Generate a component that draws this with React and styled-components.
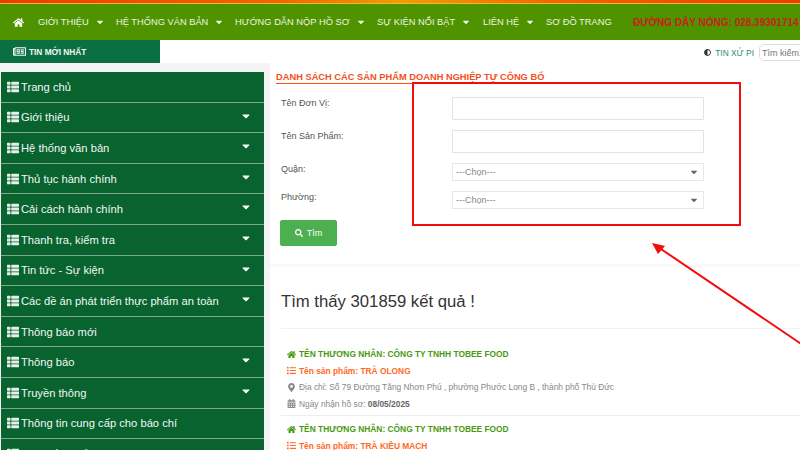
import React from 'react';
import styled, { createGlobalStyle } from 'styled-components';
import {
	FaHome,
	FaCaretDown,
	FaList,
	FaThList,
	FaRegNewspaper,
	FaAdjust,
	FaSearch,
	FaMapMarkerAlt,
	FaCalendarAlt,
} from 'react-icons/fa';

const GlobalStyle = createGlobalStyle`
	html, body {
		margin: 0;
		padding: 0;
		width: 800px;
		height: 450px;
		overflow: hidden;
		background: #fff;
		font-family: "Liberation Sans", Arial, sans-serif;
	}
	* {
		box-sizing: border-box;
	}
`;

const navItems = [
	{ label: 'GIỚI THIỆU', caret: true, width: 78 },
	{ label: 'HỆ THỐNG VĂN BẢN', caret: true, width: 119 },
	{ label: 'HƯỚNG DẪN NỘP HỒ SƠ', caret: true, width: 142 },
	{ label: 'SỰ KIỆN NỔI BẬT', caret: true, width: 106 },
	{ label: 'LIÊN HỆ', caret: true, width: 63 },
	{ label: 'SƠ ĐỒ TRANG', caret: false, width: 87 },
];

const sideItems = [
	{ label: 'Trang chủ' },
	{ label: 'Giới thiệu', caret: true },
	{ label: 'Hệ thống văn bản', caret: true },
	{ label: 'Thủ tục hành chính', caret: true },
	{ label: 'Cải cách hành chính', caret: true },
	{ label: 'Thanh tra, kiểm tra', caret: true },
	{ label: 'Tin tức - Sự kiện', caret: true },
	{ label: 'Các đề án phát triển thực phẩm an toàn', caret: true },
	{ label: 'Thông báo mới' },
	{ label: 'Thông báo', caret: true },
	{ label: 'Truyền thông', caret: true },
	{ label: 'Thông tin cung cấp cho báo chí' },
	{ label: 'Tìm kiếm Thủ tục hành chính' },
];

const results = [
	{
		company: 'TÊN THƯƠNG NHÂN: CÔNG TY TNHH TOBEE FOOD',
		product: 'Tên sản phẩm: TRÀ OLONG',
		address: 'Địa chỉ: Số 79 Đường Tăng Nhơn Phú , phường Phước Long B , thành phố Thủ Đức',
		date: '08/05/2025',
	},
	{
		company: 'TÊN THƯƠNG NHÂN: CÔNG TY TNHH TOBEE FOOD',
		product: 'Tên sản phẩm: TRÀ KIỀU MẠCH',
	},
];

export default function App() {
	return (
		<Page>
			<GlobalStyle />
			<TopStripe />
			<NavBar>
				<HomeLink>
					<FaHome size={11} />
				</HomeLink>
				{navItems.map(item => (
					<NavItem key={item.label} $width={item.width}>
						{item.label}
						{item.caret && <FaCaretDown size={10} />}
					</NavItem>
				))}
				<Hotline>ĐƯỜNG DÂY NÓNG: 028.39301714</Hotline>
			</NavBar>
			<TickerBar>
				<TickerTab>
					<FaRegNewspaper size={13} />
					TIN MỚI NHẤT
				</TickerTab>
				<TickerTools>
					<FaAdjust size={7} color="#333" />
					<TickerNews>TIN XỬ PI</TickerNews>
					<SearchInput placeholder="Tìm kiếm..." />
				</TickerTools>
			</TickerBar>
			<Body>
				<Sidebar>
					{sideItems.map(item => (
						<SideItem key={item.label}>
							<FaThList size={12} />
							<span>{item.label}</span>
							{item.caret && (
								<SideCaret>
									<FaCaretDown size={12} />
								</SideCaret>
							)}
						</SideItem>
					))}
				</Sidebar>
				<Content>
					<FormPanel>
						<PageTitle>DANH SÁCH CÁC SẢN PHẨM DOANH NGHIỆP TỰ CÔNG BỐ</PageTitle>
						<FormRow $height={33}>
							<FieldLabel>Tên Đơn Vị:</FieldLabel>
							<TextField $height={23} />
						</FormRow>
						<FormRow $height={33}>
							<FieldLabel>Tên Sản Phẩm:</FieldLabel>
							<TextField $height={23} />
						</FormRow>
						<FormRow $height={28}>
							<FieldLabel>Quận:</FieldLabel>
							<SelectField>
								---Chọn---
								<FaCaretDown size={10} color="#666" />
							</SelectField>
						</FormRow>
						<FormRow $height={28}>
							<FieldLabel>Phường:</FieldLabel>
							<SelectField>
								---Chọn---
								<FaCaretDown size={10} color="#666" />
							</SelectField>
						</FormRow>
						<SearchButton>
							<FaSearch size={8} />
							Tìm
						</SearchButton>
					</FormPanel>
					<ResultPanel>
						<ResultHeading>Tìm thấy 301859 kết quả !</ResultHeading>
						{results.map(result => (
							<ResultItem key={result.product}>
								<CompanyLine>
									<FaHome size={9} />
									{result.company}
								</CompanyLine>
								<ProductLine>
									<FaList size={9} />
									{result.product}
								</ProductLine>
								{result.address && (
									<InfoLine>
										<FaMapMarkerAlt size={9} />
										{result.address}
									</InfoLine>
								)}
								{result.date && (
									<InfoLine>
										<FaCalendarAlt size={9} />
										<span>
											Ngày nhận hồ sơ: <strong>{result.date}</strong>
										</span>
									</InfoLine>
								)}
							</ResultItem>
						))}
					</ResultPanel>
				</Content>
			</Body>
			<Highlight />
			<Arrow viewBox="0 0 150 110" aria-hidden="true">
				<line x1="150" y1="101.5" x2="6" y2="4" stroke="#f40b0b" strokeWidth="2" />
				<polygon points="0,0 13,3 6,11" fill="#f40b0b" />
			</Arrow>
		</Page>
	);
}

const Page = styled.div`
	position: relative;
	width: 800px;
	height: 450px;
	overflow: hidden;
	background: #fff;
`;

const TopStripe = styled.div`
	height: 4px;
	background: linear-gradient(90deg, #f3360f 0%, #f5620c 35%, #f39a0c 50%, #f5620c 70%, #f3360f 100%);
	border-bottom: 1px solid #e3c70a;
`;

const NavBar = styled.nav`
	display: flex;
	align-items: center;
	height: 36px;
	padding-left: 13px;
	background: #4f9300;
	color: #eef6e0;
	font-size: 9.3px;
	white-space: nowrap;
`;

const HomeLink = styled.span`
	display: flex;
	flex: 0 0 25px;
	color: #fff;
`;

const NavItem = styled.span`
	display: flex;
	align-items: center;
	gap: 6px;
	flex: 0 0 ${p => p.$width}px;
`;

const Hotline = styled.span`
	flex: none;
	color: #c8201a;
	font-size: 10px;
	font-weight: bold;
`;

const TickerBar = styled.div`
	display: flex;
	justify-content: space-between;
	align-items: center;
	height: 23px;
`;

const TickerTab = styled.div`
	display: flex;
	align-items: center;
	gap: 3px;
	width: 160px;
	height: 23px;
	padding-left: 13px;
	background: #0a7043;
	color: #f2f7f4;
	font-size: 8.3px;
	font-weight: bold;
`;

const TickerTools = styled.div`
	display: flex;
	align-items: center;
	gap: 4px;
	margin-right: -8px;
	padding-top: 2px;
`;

const TickerNews = styled.span`
	color: #2e8b6a;
	font-size: 8.4px;
`;

const SearchInput = styled.input`
	width: 49px;
	height: 17px;
	margin-left: 1px;
	padding: 0 2px;
	border: 1px solid #ddd;
	border-radius: 5px;
	outline: none;
	font-family: inherit;
	font-size: 9px;

	&::placeholder {
		color: #777;
	}
`;

const Body = styled.div`
	display: flex;
	align-items: flex-start;
	height: 387px;
	background: #f4f4f4;
`;

const Sidebar = styled.aside`
	flex: 0 0 263px;
	margin: 9px 0 0 1px;
	background: #08632f;
`;

const SideItem = styled.div`
	position: relative;
	display: flex;
	align-items: center;
	gap: 2px;
	height: 30.6px;
	padding-left: 6px;
	border-bottom: 1px solid #7fa68d;
	color: #f2f7f4;
	font-size: 11.2px;

	svg {
		flex: none;
		color: #e6efe9;
	}
`;

const SideCaret = styled.span`
	position: absolute;
	top: 7px;
	right: 12px;
	display: flex;

	svg {
		color: #fff;
	}
`;

const Content = styled.main`
	flex: 1;
	margin-left: 6px;
	display: flex;
	flex-direction: column;
	min-width: 0;
	background: #f9f9f9;
`;

const FormPanel = styled.section`
	height: 201px;
	padding: 3px 0 0 5px;
	background: #fff;
`;

const PageTitle = styled.h2`
	display: inline-block;
	margin: 0 0 13px 1px;
	border-bottom: 1px solid #ff4d14;
	color: #f4511e;
	font-size: 9.3px;
	line-height: 11px;
	font-weight: bold;
`;

const FormRow = styled.div`
	display: flex;
	height: ${p => p.$height}px;
	padding-left: 6px;
`;

const FieldLabel = styled.label`
	flex: 0 0 171px;
	padding-top: 1px;
	color: #555;
	font-size: 9px;
	line-height: 11px;
`;

const TextField = styled.input`
	width: 252px;
	height: ${p => p.$height}px;
	border: 1px solid #e2e2e2;
	border-radius: 1px;
	background: #fff;
`;

const SelectField = styled.div`
	display: flex;
	justify-content: space-between;
	align-items: center;
	width: 252px;
	height: 18px;
	padding: 0 4px 0 3px;
	border: 1px solid #e8e8e8;
	color: #888;
	font-size: 9px;
`;

const SearchButton = styled.button`
	display: flex;
	align-items: center;
	justify-content: center;
	gap: 4px;
	width: 57px;
	height: 26px;
	margin: 1px 0 0 5px;
	border: 1px solid #4cae4c;
	border-radius: 2px;
	background: #4caf50;
	color: #fff;
	font-family: inherit;
	font-size: 9px;
`;

const ResultPanel = styled.section`
	margin-top: 3px;
	height: 183px;
	padding: 24px 0 0 11px;
	background: #fff;
`;

const ResultHeading = styled.h1`
	margin: 0;
	height: 38px;
	border-bottom: 1px solid #f2f2f2;
	color: #333;
	font-size: 16.7px;
	line-height: 21px;
	font-weight: normal;
`;

const ResultItem = styled.div`
	display: flex;
	flex-direction: column;
	padding: 17px 0 0 6px;

	& + & {
		margin-top: 3px;
		padding-top: 5px;
		border-top: 1px solid #eee;
	}
`;

const Line = styled.div`
	display: flex;
	align-items: center;
	gap: 3px;
	height: 16.5px;
	font-size: 8.4px;

	svg {
		flex: none;
	}
`;

const CompanyLine = styled(Line)`
	color: #4a9a10;
	font-weight: bold;
`;

const ProductLine = styled(Line)`
	color: #ff6a26;
	font-weight: bold;
`;

const InfoLine = styled(Line)`
	color: #888;

	strong {
		color: #666;
	}
`;

const Highlight = styled.div`
	position: absolute;
	top: 82px;
	left: 412px;
	width: 329px;
	height: 144px;
	border: 2px solid #f40b0b;
`;

const Arrow = styled.svg`
	position: absolute;
	top: 243px;
	left: 652px;
	width: 150px;
	height: 110px;
`;
